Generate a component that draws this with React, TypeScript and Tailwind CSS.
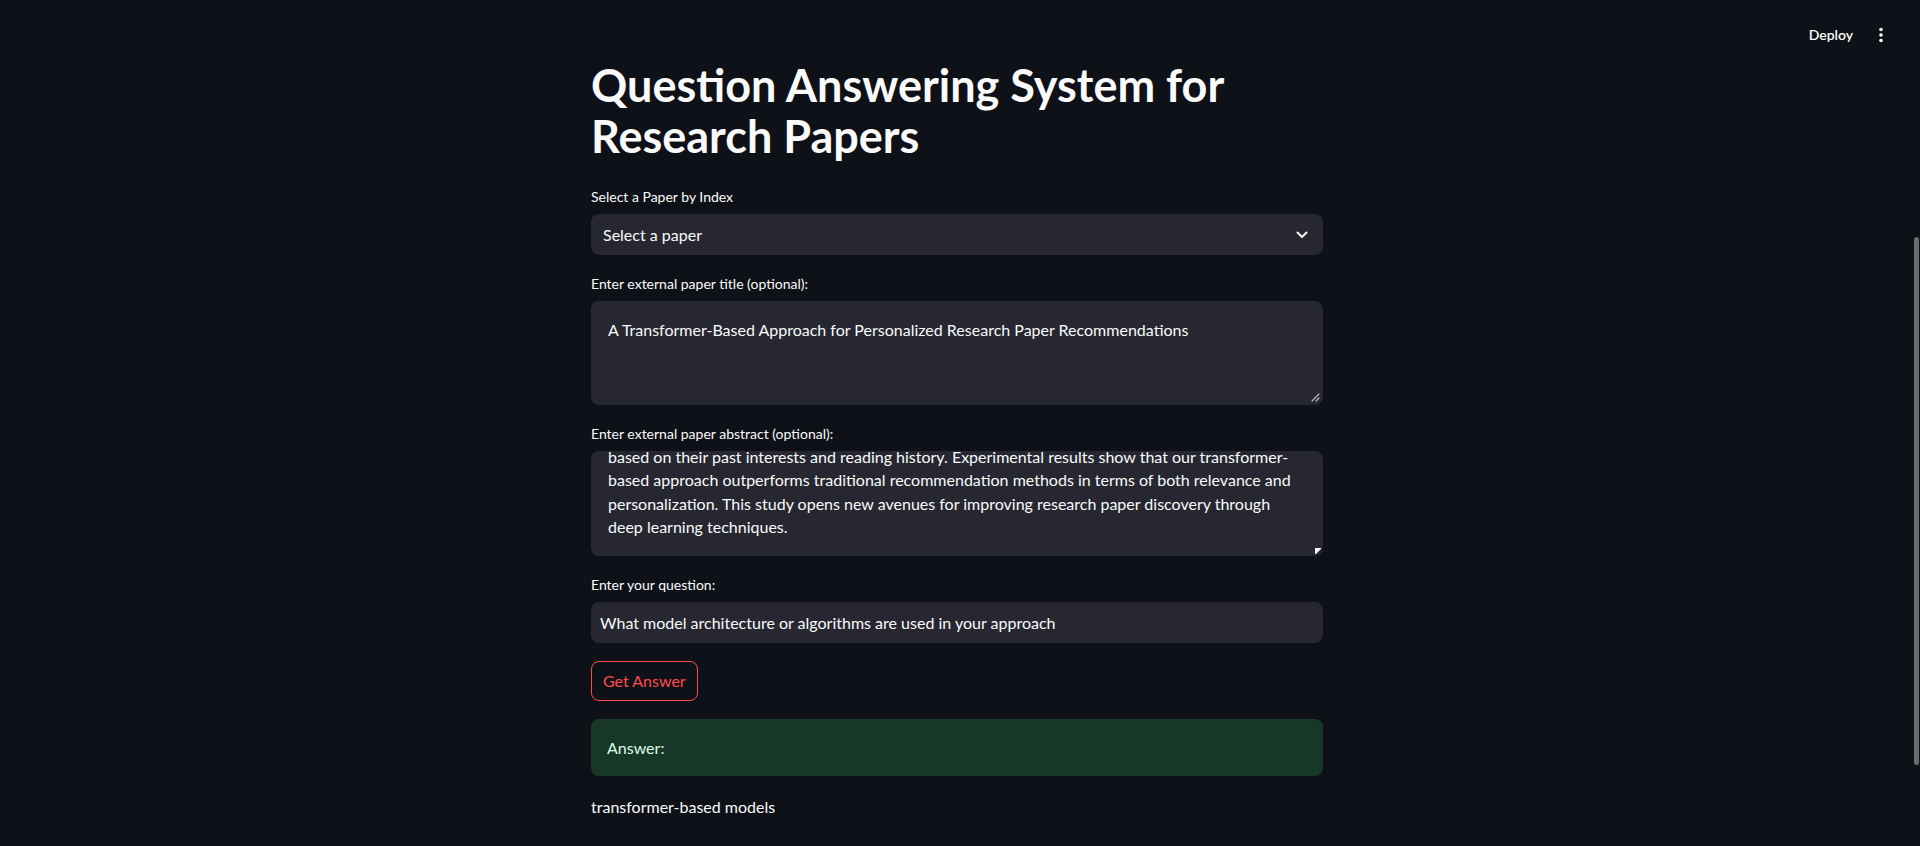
import React from "react";

const abstractLines = [
  "based on their past interests and reading history. Experimental results show that our transformer-",
  "based approach outperforms traditional recommendation methods in terms of both relevance and",
  "personalization. This study opens new avenues for improving research paper discovery through",
  "deep learning techniques.",
];

function Label({ children }: { children: React.ReactNode }) {
  return (
    <div className="h-[24px] mb-[6px] flex items-center text-[14px] text-[#fafafa]">
      {children}
    </div>
  );
}

export default function App() {
  return (
    <div className="relative h-[846px] overflow-hidden bg-[#0e1117] text-[#fafafa] font-['Lato','Noto_Sans',sans-serif]">
      {/* top bar */}
      <header className="h-[60px] flex justify-end items-start pt-[25px] pr-[31px] gap-[20px]">
        <span className="text-[14px] font-semibold leading-[20px] text-[#fafafa]">Deploy</span>
        <span className="w-[16px] h-[20px] flex items-center justify-center">
          <svg width="4" height="16" viewBox="0 0 4 16">
            <circle cx="2" cy="2.5" r="1.8" fill="#fafafa" />
            <circle cx="2" cy="8" r="1.8" fill="#fafafa" />
            <circle cx="2" cy="13.5" r="1.8" fill="#fafafa" />
          </svg>
        </span>
      </header>

      <div className="pr-[6px]">
        <main className="w-[732px] mx-auto flex flex-col">
          <h1 className="text-[45px] font-bold leading-[51px] text-[#fafafa]">
            Question Answering System for
            <br />
            Research Papers
          </h1>

          <div className="mt-[22px]">
            <Label>Select a Paper by Index</Label>
            <div className="h-[41px] rounded-[8px] bg-[#262730] pl-[12px] pr-[15px] flex items-center justify-between text-[16px]">
              <span>Select a paper</span>
              <svg width="12" height="8" viewBox="0 0 12 8" fill="none">
                <path d="M1.5 1.5 L6 6 L10.5 1.5" stroke="#fafafa" strokeWidth="2" strokeLinecap="round" strokeLinejoin="round" />
              </svg>
            </div>
          </div>

          <div className="mt-[16px]">
            <Label>Enter external paper title (optional):</Label>
            <div className="relative h-[104px] rounded-[8px] bg-[#262730] px-[17px] pt-[17px] text-[16px] leading-[23.3px]">
              A Transformer-Based Approach for Personalized Research Paper Recommendations
              <svg className="absolute right-[3px] bottom-[3px]" width="9" height="9" viewBox="0 0 9 9">
                <path d="M1 8 L8 1 M5 8 L8 5" stroke="#b8b8bc" strokeWidth="1.2" strokeLinecap="round" />
              </svg>
            </div>
          </div>

          <div className="mt-[16px]">
            <Label>Enter external paper abstract (optional):</Label>
            <div className="relative h-[105px] rounded-[8px] bg-[#262730] overflow-hidden px-[17px] text-[16px] leading-[23.3px]">
              <div className="mt-[-6px]">
                {abstractLines.map((line, i) => (
                  <div key={i} className="whitespace-nowrap">
                    {line}
                  </div>
                ))}
              </div>
              <svg className="absolute right-[2px] bottom-[2px]" width="6" height="6" viewBox="0 0 6 6">
                <polygon points="0,0 6,0 6,1 1,6 0,6" fill="#f2f2f2" />
              </svg>
            </div>
          </div>

          <div className="mt-[16px]">
            <Label>Enter your question:</Label>
            <div className="h-[41px] rounded-[8px] bg-[#262730] px-[9px] flex items-center text-[16px]">
              What model architecture or algorithms are used in your approach
            </div>
          </div>

          <div className="mt-[18px]">
            <button className="h-[40px] px-[11px] rounded-[8px] border border-[#ff4b4b] text-[#ff4b4b] text-[16px] bg-transparent">
              Get Answer
            </button>
          </div>

          <div className="mt-[18px] h-[57px] rounded-[8px] bg-[#173828] px-[16px] flex items-center text-[16px] text-[#dffde9]">
            Answer:
          </div>

          <p className="mt-[18px] text-[16px] leading-[25.6px] text-[#fafafa]">transformer-based models</p>
        </main>
      </div>

      {/* scrollbar thumb */}
      <div className="absolute right-[1px] top-[237px] h-[528px] w-[5px] rounded-full bg-[#6b6c70]" />
    </div>
  );
}
